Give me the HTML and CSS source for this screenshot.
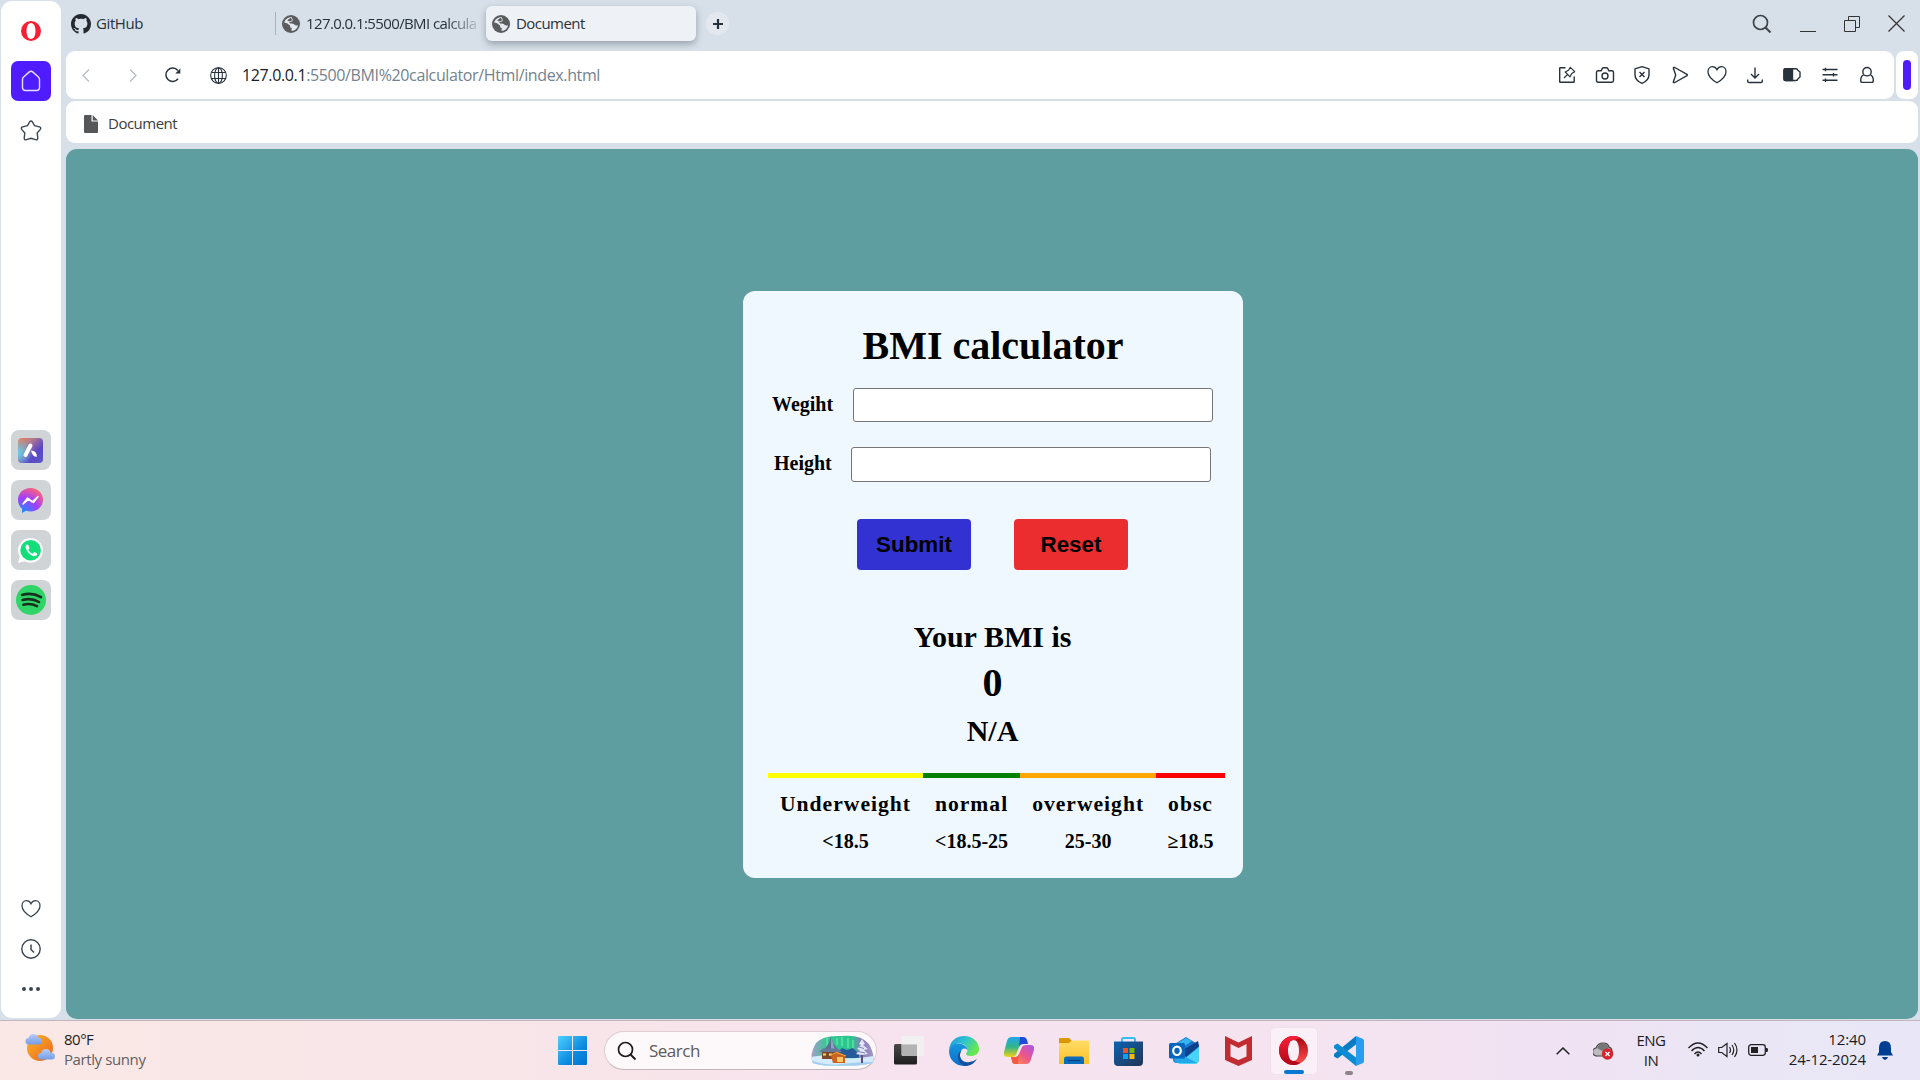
FILE: index.html
```html
<!DOCTYPE html>
<html lang="en">
<head>
<meta charset="utf-8">
<title>Document</title>
<link rel="stylesheet" href="styles.css">
</head>
<body>
<svg class="defs" width="0" height="0" aria-hidden="true">
  <defs>
    <symbol id="globe-solid" viewBox="0 0 18 18"><circle cx="9" cy="9" r="9" fill="#5b5c5e"/><path d="M9.800 2.200C6 1.800 2.600 4.600 2.200 7.600L5 8.200l3 2.200.3 2 1.500.7-.4 2.700c3 .2 6.200-2.200 6.600-5.600-1.500.6-2.600.5-3.400-.4-.9-1.300-2.300-1.100-4.400-1.200L7 7l3.300-.4.4-2z" fill="#e3e9ee"/><path d="M5.200 5.600l3.200-2.800 1.500 1.200-.2 1.800-2.900.4z" fill="#5b5c5e"/></symbol>
    <symbol id="heart" viewBox="0 0 20 20"><path d="M10 17.800C6.500 15.600 1 11.600 1 6.900 1 3.900 2.800 1.700 5.300 1.700c2 0 3.700.9 4.700 3 1-2.100 2.700-3 4.700-3 2.500 0 4.300 2.200 4.300 5.200 0 4.700-5.500 8.700-9 10.900z" fill="none" stroke="currentColor" stroke-width="1.300"/></symbol>
    <symbol id="search" viewBox="0 0 20 20"><circle cx="8.500" cy="8.500" r="7" fill="none" stroke="currentColor" stroke-width="1.700"/><path d="M13.500 13.500l5 5" stroke="currentColor" stroke-width="2"/></symbol>
    <linearGradient id="aria" x1="0" y1="0" x2="1" y2="1"><stop offset="0" stop-color="#e98557"/><stop offset=".3" stop-color="#b77c8c"/><stop offset=".65" stop-color="#5b46c8"/><stop offset="1" stop-color="#5b58c0"/></linearGradient>
    <radialGradient id="ariaGlow" cx="0" cy=".6" r=".6"><stop offset="0" stop-color="#62d0ea"/><stop offset="1" stop-color="#62d0ea" stop-opacity="0"/></radialGradient>
    <radialGradient id="msg" cx=".2" cy="1" r="1.100"><stop offset="0" stop-color="#1591ff"/><stop offset=".55" stop-color="#a23eff"/><stop offset="1" stop-color="#ff6374"/></radialGradient>
    <linearGradient id="sun" x1="0" y1="0" x2="1" y2="1"><stop offset="0" stop-color="#f6b828"/><stop offset="1" stop-color="#f0601c"/></linearGradient>
    <linearGradient id="cloud" x1="0" y1="0" x2="0" y2="1"><stop offset="0" stop-color="#b4cdf8"/><stop offset="1" stop-color="#759de6"/></linearGradient>
    <linearGradient id="win" x1="0" y1="0" x2="1" y2="1"><stop offset="0" stop-color="#4dd0ff"/><stop offset=".6" stop-color="#0c8be0"/><stop offset="1" stop-color="#0071d0"/></linearGradient>
    <linearGradient id="aurora" x1="0" y1="0" x2="1" y2="0"><stop offset="0" stop-color="#a99cc8"/><stop offset=".25" stop-color="#35c598"/><stop offset=".65" stop-color="#2ac690"/><stop offset=".8" stop-color="#8b7bb8"/><stop offset="1" stop-color="#a597c8"/></linearGradient>
    <linearGradient id="dark" x1="0" y1="0" x2="0" y2="1"><stop offset="0" stop-color="#4a4a49"/><stop offset="1" stop-color="#1e1e1e"/></linearGradient>
    <linearGradient id="edgeTop" x1="0" y1="0" x2="1" y2=".5"><stop offset="0" stop-color="#1b91dc"/><stop offset=".5" stop-color="#2cc3d1"/><stop offset="1" stop-color="#68e84e"/></linearGradient>
    <linearGradient id="edgeLow" x1="0" y1="0" x2="0" y2="1"><stop offset="0" stop-color="#1698dc"/><stop offset="1" stop-color="#0a6ecb"/></linearGradient>
    <linearGradient id="copA" x1="0" y1="0" x2="0" y2="1"><stop offset="0" stop-color="#1fa4ee"/><stop offset=".5" stop-color="#32b689"/><stop offset="1" stop-color="#f4d313"/></linearGradient>
    <linearGradient id="copB" x1="1" y1="0" x2="0" y2="1"><stop offset="0" stop-color="#a854ee"/><stop offset=".5" stop-color="#ee5686"/><stop offset="1" stop-color="#ff9c4a"/></linearGradient>
    <linearGradient id="fold" x1="0" y1="0" x2="0" y2="1"><stop offset="0" stop-color="#ffdc66"/><stop offset="1" stop-color="#fbc02a"/></linearGradient>
    <linearGradient id="store" x1="0" y1="0" x2="1" y2="1"><stop offset="0" stop-color="#0a63b4"/><stop offset="1" stop-color="#243454"/></linearGradient>
    <linearGradient id="opRed" x1="0" y1="0" x2="0" y2="1"><stop offset="0" stop-color="#fb1e36"/><stop offset="1" stop-color="#ad0719"/></linearGradient>
    <linearGradient id="opDeep" x1="0" y1="0" x2="0" y2="1"><stop offset="0" stop-color="#a6030f"/><stop offset="1" stop-color="#ff5450"/></linearGradient>
  </defs>
</svg>

<div class="browser">
  <nav class="sidebar">
    <svg class="side-opera" width="20" height="20" viewBox="0 0 20 20"><path fill-rule="evenodd" fill="#fa1e32" d="M10 0a10 10 0 1 0 0 20 10 10 0 0 0 0-20zm0 2c2.900 0 4.500 3.600 4.500 8s-1.600 8-4.500 8-4.500-3.600-4.500-8S7.100 2 10 2z"/></svg>
    <div class="home"><svg width="20" height="22" viewBox="0 0 20 22"><path d="M1.500 9.500Q1.500 8 2.600 7L8.300 1.900Q10 .5 11.700 1.900L17.400 7Q18.500 8 18.500 9.500V17.500Q18.500 20.500 15.500 20.500H4.500Q1.500 20.500 1.500 17.500Z" fill="none" stroke="#e6e0ff" stroke-width="1.400"/></svg></div>
    <svg class="side-star" width="22" height="21" viewBox="0 0 22 21"><path d="M9.600 1.900Q11 .2 12.400 1.900L14.500 5.600 19.300 6.800Q21.500 7.600 20.300 9.400L17.200 13 17.800 18Q17.700 20.300 15.600 19.700L11 18.300 6.400 19.700Q4.300 20.300 4.200 18L4.800 13 1.700 9.400Q.5 7.600 2.700 6.800L7.500 5.600Z" fill="none" stroke="#3c4650" stroke-width="1.400"/></svg>
    <div class="apps">
      <div class="app"><svg width="25" height="25" viewBox="0 0 25 25"><rect width="25" height="25" rx="4" fill="url(#aria)"/><rect width="25" height="25" rx="4" fill="url(#ariaGlow)"/><path d="M12.500 7.500L7.500 17" stroke="#fff" stroke-width="4" stroke-linecap="round"/><path d="M13 12.500q5.500 0 6 6-4 1.500-6-6z" fill="#fff"/></svg></div>
      <div class="app"><svg width="25" height="25" viewBox="0 0 25 25"><path d="M12.500 0C5.500 0 0 5 0 11.800c0 3.700 1.500 6.700 4 9V25l4-2.200c1.400.4 2.900.6 4.500.6C19.500 23.400 25 18.500 25 11.800S19.500 0 12.500 0z" fill="url(#msg)"/><path d="M5 16l4.500-6 4.500 4 6-5.500-4.500 6-4.500-3.500z" fill="#fff" stroke="#fff" stroke-width="1.500" stroke-linejoin="round"/></svg></div>
      <div class="app"><svg width="25" height="25" viewBox="0 0 25 25"><path d="M12.500 0a12.300 12.300 0 0 0-10.700 18.500L0 25l6.600-1.700A12.400 12.400 0 1 0 12.500 0z" fill="#fff"/><circle cx="12.600" cy="12.300" r="10.300" fill="#12df79"/><path d="M8.700 6.500c-4 2.500 4 13 8.600 11.600 1.800-.5 2-1.700 1.800-2.600l-2.900-1.500-1.700 1.700c-2-.8-3.400-2.300-4.200-4l1.200-1.500-1.300-3.400z" fill="#fff"/></svg></div>
      <div class="app"><svg width="30" height="30" viewBox="0 0 30 30"><circle cx="15" cy="15" r="15" fill="#2fd566"/><path d="M6 10q10-3 19 2.200M6.600 15q9-2.500 16.400 2M7.400 19.700q7-2 13.600 1.500" fill="none" stroke="#17301e" stroke-width="2.600" stroke-linecap="round"/></svg></div>
    </div>
    <div class="side-foot">
      <svg width="20" height="20"><use href="#heart"/></svg>
      <svg width="20" height="20" viewBox="0 0 20 20"><circle cx="10" cy="10" r="9.200" fill="none" stroke="currentColor" stroke-width="1.400"/><path d="M10 5.500V10.500L13 13.500" fill="none" stroke="currentColor" stroke-width="1.500"/></svg>
      <svg width="20" height="20" viewBox="0 0 20 20" fill="currentColor"><circle cx="3" cy="10" r="2"/><circle cx="10" cy="10" r="2"/><circle cx="17" cy="10" r="2"/></svg>
    </div>
  </nav>

  <main class="window">
    <header class="tabs">
      <div class="tab tab-first"><svg width="20" height="20" viewBox="0 0 16 16"><path fill="#24292f" d="M8 0C3.580 0 0 3.580 0 8c0 3.540 2.290 6.530 5.470 7.590.4.070.55-.17.55-.38 0-.19-.01-.82-.01-1.490-2.010.37-2.530-.49-2.690-.94-.09-.23-.48-.94-.82-1.130-.28-.15-.68-.52-.01-.53.63-.01 1.080.58 1.230.82.72 1.210 1.870.87 2.330.66.070-.52.28-.87.51-1.070-1.780-.2-3.640-.89-3.640-3.950 0-.87.31-1.590.82-2.150-.08-.2-.36-1.020.08-2.120 0 0 .67-.21 2.200.82.64-.18 1.320-.27 2-.27s1.360.09 2 .27c1.530-1.040 2.200-.82 2.200-.82.44 1.100.16 1.920.08 2.120.51.56.82 1.270.82 2.150 0 3.070-1.870 3.750-3.650 3.950.29.25.54.73.54 1.480 0 1.070-.01 1.930-.01 2.200 0 .21.150.46.55.38A8.010 8.010 0 0 0 16 8c0-4.420-3.580-8-8-8z"/></svg><span>GitHub</span></div>
      <div class="tab tab-second"><svg width="18" height="18"><use href="#globe-solid"/></svg><span class="fade">127.0.0.1:5500/BMI calcula</span></div>
      <div class="tab tab-active"><svg width="18" height="18"><use href="#globe-solid"/></svg><span>Document</span></div>
      <div class="new-tab"><svg width="10" height="10" viewBox="0 0 10 10"><path d="M5 0v10M0 5h10" stroke="#25303a" stroke-width="2.200"/></svg></div>
      <div class="controls">
        <svg width="20" height="20"><use href="#search"/></svg>
        <svg width="16" height="20" viewBox="0 0 16 20"><path d="M0 17.500h16" stroke="#333" stroke-width="1"/></svg>
        <svg width="16" height="16" viewBox="0 0 16 16"><path d="M.5 4.500h11v11H.5zM4.500 4.500v-4h11v11h-4" fill="none" stroke="#333"/></svg>
        <svg width="17" height="17" viewBox="0 0 17 17"><path d="M.5.5l16 16m0-16l-16 16" stroke="#333" stroke-width="1.200"/></svg>
      </div>
    </header>

    <div class="toolbar">
      <div class="address">
        <svg class="nav-back" width="8" height="13" viewBox="0 0 8 13"><path d="M7 .5l-6 6 6 6" fill="none" stroke="#b5bac0" stroke-width="1.200"/></svg>
        <svg class="nav-fwd" width="8" height="13" viewBox="0 0 8 13"><path d="M1 .5l6 6-6 6" fill="none" stroke="#b5bac0" stroke-width="1.200"/></svg>
        <svg class="nav-reload" width="16" height="16" viewBox="0 0 16 16"><path d="M13 11.800A6.700 6.700 0 1 1 12.800 3.500" fill="none" stroke="#28323c" stroke-width="1.500"/><path d="M15.300 1.500v5h-5z" fill="#28323c"/></svg>
        <svg class="nav-site" width="17" height="17" viewBox="0 0 17 17" fill="none" stroke="#28323c" stroke-width="1.100"><circle cx="8.500" cy="8.500" r="7.800"/><ellipse cx="8.500" cy="8.500" rx="3.900" ry="7.800"/><path d="M8.500.7v15.600M1.500 5.500h14M1.500 11.500h14"/></svg>
        <span class="url"><b>127.0.0.1</b>:5500/BMI%20calculator/Html/index.html</span>
        <div class="tools">
          <svg viewBox="0 0 20 20"><path d="M8.500 2.700H3.200Q2.700 2.700 2.700 3.200V16.800Q2.700 17.300 3.200 17.300H16.700Q17.200 17.300 17.200 16.800V11.500"/><path d="M7 13l3.200-3.200M13.300 2.300l4.400 4.400-3 1.800-1.700 3.300-4.800-4.800 3.300-1.700z" stroke-width="1.200" stroke-linejoin="round"/></svg>
          <svg viewBox="0 0 20 20"><path d="M3.200 5.800h2.500Q6.200 5.800 6.500 5.300L7.300 3.400Q7.700 2.700 8.500 2.700h3Q12.300 2.700 12.700 3.400L13.500 5.300Q13.800 5.800 14.300 5.800H16.800Q18.500 5.800 18.500 7.500V15.500Q18.500 17.200 16.800 17.200H3.200Q1.500 17.200 1.500 15.500V7.500Q1.500 5.800 3.200 5.800z"/><circle cx="10" cy="11" r="3"/></svg>
          <svg viewBox="0 0 20 20"><path d="M10 1.600L17 3.800V9.500Q17 15.500 10 18.400 3 15.500 3 9.500V3.800z" stroke-linejoin="round"/><path d="M7.500 7l5 5m0-5l-5 5"/></svg>
          <svg viewBox="0 0 20 20"><path d="M3.300 3Q3.500 2 4.800 2.500L17 9.300Q17.700 10 17 10.700L4.800 17.500Q3.500 18 3.300 17L5.700 10z" stroke-linejoin="round"/></svg>
          <svg viewBox="0 0 20 20"><use href="#heart"/></svg>
          <svg viewBox="0 0 20 20"><path d="M10 2.500V12.500M6 9l4 4 4-4M2.700 14.500V16.200Q2.700 17.500 4 17.500H16Q17.300 17.500 17.300 16.200V14.500"/></svg>
          <svg viewBox="0 0 20 20"><path d="M3.500 3.700H14Q15.500 3.700 15.800 5.200L18 7V12L15.800 14Q15.500 15.500 14 15.500H3.500Q2 15.500 2 14V5.200Q2 3.700 3.500 3.700z"/><path d="M3.500 3.700H10.500V15.500H3.500Q2 15.500 2 14V5.200Q2 3.700 3.500 3.700z" fill="currentColor"/></svg>
          <svg viewBox="0 0 20 20"><path d="M2.500 4.500h15M2.500 9.800h15M2.500 15.200h15M5.500 2.700v3.600M13.500 8v3.600M5.500 13.400V17"/></svg>
          <svg viewBox="0 0 20 20"><circle cx="10" cy="6.700" r="4.200"/><path d="M6.500 9.800Q3.700 11 3.700 15.500 3.700 17.400 5.500 17.400H14.500Q16.300 17.400 16.300 15.500 16.300 11 13.500 9.800"/></svg>
        </div>
      </div>
      <div class="panel-toggle"><span></span></div>
    </div>

    <div class="bookmarks">
      <svg width="14" height="18" viewBox="0 0 14 18"><path d="M1 0h6.500v6.500H14V17q0 1-1 1H1q-1 0-1-1V1q0-1 1-1zM8.700 0L14 5.500H8.700z" fill="#565759"/></svg>
      <span>Document</span>
    </div>

    <section class="page">
      <form class="card">
        <h1>BMI calculator</h1>
        <div class="field"><label for="weight">Wegiht</label><input id="weight" type="text"></div>
        <div class="field field-height"><label for="height">Height</label><input id="height" type="text"></div>
        <div class="actions">
          <button type="button" class="submit">Submit</button>
          <button type="button" class="reset">Reset</button>
        </div>
        <div class="result">
          <h2>Your BMI is</h2>
          <div class="score">0</div>
          <div class="verdict">N/A</div>
        </div>
        <div class="scale">
          <div class="band under"><h3>Underweight</h3><p>&lt;18.5</p></div>
          <div class="band normal"><h3>normal</h3><p>&lt;18.5-25</p></div>
          <div class="band over"><h3>overweight</h3><p>25-30</p></div>
          <div class="band obese"><h3>obsc</h3><p>≥18.5</p></div>
        </div>
      </form>
    </section>
  </main>
</div>

<footer class="taskbar">
  <div class="weather">
    <svg width="30" height="30" viewBox="0 0 30 30"><circle cx="15" cy="15" r="13" fill="url(#sun)"/><path d="M3 11.500a3.300 3.300 0 0 1 .5-6.500Q5 1 8.500 1T13 4.500q3.500 0 4 3.500 0 3.500-3.500 3.500z" fill="url(#cloud)"/><path d="M15.500 26.500a3.300 3.300 0 0 1 .5-6.500q1-4 5-4t4.500 3.500Q30 19.500 30 23q0 3.500-3.500 3.500z" fill="url(#cloud)"/></svg>
    <div class="weather-text"><span>80°F</span><span class="muted">Partly sunny</span></div>
  </div>

  <div class="dock">
    <div class="slot"><svg width="29" height="29" viewBox="0 0 29 29"><path d="M1 0h13v14H0V1q0-1 1-1zM15 0h13q1 0 1 1v13H15zM0 15h14v14H1q-1 0-1-1zM15 15h14v13q0 1-1 1H15z" fill="url(#win)"/></svg></div>
    <div class="search">
      <svg width="20" height="20"><use href="#search"/></svg>
      <span>Search</span>
      <svg class="scene" width="63" height="31" viewBox="0 0 63 31">
        <clipPath id="sceneClip"><path d="M5 8Q12 0 30 1 50-1 58 9 64 20 62 28 50 31 30 30.500 8 31 2 28-2 20 5 8z"/></clipPath>
        <g clip-path="url(#sceneClip)"><rect width="63" height="31" fill="url(#aurora)"/><path d="M16 3v9m10-9v7m5-8v9m6-8v10m5-8v9" stroke="#63f0a4" stroke-opacity=".6" stroke-width="2"/><path d="M26 18L31 13l5 2 6-2 6 6v4H26z" fill="#275a99"/><path d="M0 22q12-3 24 0t39-1v10H0z" fill="#d3ebfb"/><path d="M0 25q14 6 30 4t33-2v4H0z" fill="#a4cdf2"/><path d="M20 1l2 7 5 7H13l5-7z" fill="#5f6c8f"/><path d="M20 1l2 7 2 7h-4z" fill="#8fa0c0"/><path d="M11 15h17v9H11z" fill="#7c482c"/><path d="M8 17l4-3.500h15l4 3.500z" fill="#66789a"/><path d="M12 18.500h3v2h-3zm6 0h3v2h-3z" fill="#ffd65c"/><path d="M20 21l7-4 7 4v7H22z" fill="#c9651f"/><path d="M26 22h6v5h-6z" fill="#ffc56a"/><path d="M18 20.500l8-3 9 3.500" stroke="#ffb13b" fill="none"/><path d="M51 6v22" stroke="#5d4c78" stroke-width="2"/><path d="M51 4l3 5-2 1 5 4-4 1 4 4-6 1-6-1 4-4-3-1 4-4-2-1z" fill="#e0e4f6"/><path d="M48 12l5 1.500m-6 3l7 1.500" stroke="#7d84ab"/></g>
      </svg>
    </div>
    <div class="slot"><svg width="30" height="29" viewBox="0 0 30 29"><rect y="8" width="23" height="20.500" rx="1.500" fill="url(#dark)"/><rect x="7.500" y="0" width="22.500" height="20" rx="1.500" fill="#f1f1f1" fill-opacity=".95"/><path d="M8 8.500h15V20H8z" fill="#b3b3b3"/></svg></div>
    <div class="slot"><svg width="30" height="30" viewBox="0 0 30 30"><path d="M0 14C1 5 7 0 15 0c9 0 15 6 15 13 0 5-4 7-8 7-3 0-5-1-5-2 0-1 1.500-1.500 1.500-4C18.500 9 13 7 9 7.500 4 8 1 11 0 14z" fill="url(#edgeTop)"/><path d="M0 15C1 9 5 7.500 9 7.500c5 0 9.500 3 9.500 6.500-3-3-7-1-7.500 4-.5 6 4 10 8 11.200C9 32 0 25 0 15z" fill="url(#edgeLow)"/><path d="M12.500 14.500C9 20 12 25 17 26q6 1 11-3c-3 5-8 7.500-12.500 7C9 28 6 18 12.500 14.500z" fill="#1252a0"/></svg></div>
    <div class="slot"><svg width="30" height="28" viewBox="0 0 30 28"><path d="M8 0h10q3 0 4 3l1 4h-4q-3 0-4 3l-3 8q-1 2-4 2H4q-5 0-4-5L3 4q1-4 5-4z" fill="url(#copA)"/><path d="M16 0h3q3 0 4 3l1 4h-5q-3 0-4 3z" fill="#1c4cd8"/><path d="M22 27H12q-3 0-4-3l-1-4h4q3 0 4-3l3-7q1-2 4-2h4q5 0 4 5l-3 9q-1 5-5 5z" fill="url(#copB)"/><path d="M14 27h-3q-3 0-3-3l-1-4h4q3 0 4-3z" fill="#f45a42"/></svg></div>
    <div class="slot"><svg width="30" height="28" viewBox="0 0 30 28"><path d="M0 2q0-1 1-1h9l3 3-3 3H0z" fill="#dc9700"/><path d="M0 6h10l3-2.500h16q1 0 1 1V27H0z" fill="url(#fold)"/><path d="M5 27v-5q0-2.500 2.500-2.500h15q2.500 0 2.500 2.500v5z" fill="#0b6dba"/><path d="M8.500 23.500h13" stroke="#073f7c" stroke-width="1.200"/></svg></div>
    <div class="slot"><svg width="29" height="30" viewBox="0 0 29 30"><path d="M8 6V3.500Q8 2 9.500 2h10Q21 2 21 3.500V6" fill="none" stroke="#35bdf2" stroke-width="2"/><path d="M0 5.500h29V26q0 4-4 4H4q-4 0-4-4z" fill="url(#store)"/><path d="M9 12h5v5H9z" fill="#f35022"/><path d="M15.500 12h5v5h-5z" fill="#7db700"/><path d="M9 18h5v5H9z" fill="#0aa4ee"/><path d="M15.500 18h5v5h-5z" fill="#ffb803"/></svg></div>
    <div class="slot"><svg width="30" height="27" viewBox="0 0 30 27"><path d="M4 8L17 0l13 8v14q0 4-4 4H8q-4 0-4-4z" fill="#1676cb"/><path d="M7 7L17 1l6 3-13 9z" fill="#35b4ef"/><path d="M14 13l15-9 1 5-13 11z" fill="#103f8c"/><path d="M30 10v12q0 5-4 5H9z" fill="#48d4f7"/><path d="M5 20l10-1 13 7H9q-4 0-4-6z" fill="#22a7e8"/><rect y="6" width="16" height="15.500" rx="1.500" fill="#0865bd"/><ellipse cx="8" cy="13.800" rx="3.800" ry="4.200" fill="none" stroke="#fff" stroke-width="2.200"/></svg></div>
    <div class="slot"><svg width="27" height="30" viewBox="0 0 27 30"><path d="M0 0l13.500 6.500L27 0v24l-13.500 6L0 24zM5.500 8v12.500l8 3.500 8-3.500V8l-8 4z" fill="#c02c31" fill-rule="evenodd"/></svg></div>
    <div class="slot"><div class="active-app"><svg width="29" height="29" viewBox="0 0 29 29"><path fill-rule="evenodd" fill="url(#opDeep)" d="M14.500 0a14.500 14.500 0 1 1 0 29 14.500 14.500 0 0 1 0-29zm0 4c-4 0-5.500 5-5.500 10.500S10.500 25 14.500 25 20 20 20 14.500 18.500 4 14.500 4z"/><path fill="url(#opRed)" d="M14.500 0a14.500 14.500 0 0 0 0 29c2.500 0 5-.8 7-2.300-2.200-.4-4.200-1.200-5.500-2-.5.200-1 .3-1.500.3-4 0-5.500-5-5.500-10.500S10.500 4 14.500 4q.8 0 1.500.3c1.300-1 3.300-1.700 5.500-2C19.500.8 17 0 14.500 0z"/></svg><i class="indicator"></i></div></div>
    <div class="slot"><div class="running-app"><svg width="30" height="30" viewBox="0 0 30 30"><path d="M22 0v8.500L3.500 22.500 0 20.500V18z" fill="#087dc3"/><path d="M22 30v-8.500L3.500 7.500 0 9.500V12z" fill="#0a8bd3"/><path d="M22 0l7 3q1 .5 1 2v20q0 1.500-1 2l-7 3z" fill="#279df0"/></svg><i class="indicator"></i></div></div>
  </div>

  <div class="tray">
    <svg class="chevron" width="14" height="8" viewBox="0 0 14 8"><path d="M.7 7.300L7 1l6.300 6.300" fill="none" stroke="#222" stroke-width="1.500"/></svg>
    <svg class="sync" width="21" height="18" viewBox="0 0 21 18"><path d="M4.500 14A4 4 0 0 1 3 6Q5 1 10 1t6 4q3 1 3 4.500T15 14z" fill="#bcbcbc" stroke="#444" stroke-width="1.200"/><path d="M4 6Q6 1.500 10 1.500T16 6L9 9z" fill="#777"/><circle cx="14.500" cy="12" r="5.700" fill="#d8232f"/><path d="M12.500 10l4 4m0-4l-4 4" stroke="#fff" stroke-width="1.300"/></svg>
    <div class="lang"><span>ENG</span><span>IN</span></div>
    <div class="status">
      <svg width="20" height="15" viewBox="0 0 20 15" fill="none" stroke="#222" stroke-width="1.400"><path d="M.5 6Q10-4 19.500 6M3.500 9Q10 2 16.500 9M6.500 12Q10 8 13.500 12"/><circle cx="10" cy="13" r="1.500" fill="#222" stroke="none"/></svg>
      <svg width="20" height="16" viewBox="0 0 20 16" fill="none" stroke="#222" stroke-width="1.200"><path d="M.7 5.500h3L9 1.500v13l-5.300-4h-3zM11.500 5Q13.500 8 11.500 11M14 3q3.500 5 0 10M16.500 1q5 7 0 14"/></svg>
      <svg width="20" height="12" viewBox="0 0 20 12"><rect x=".7" y=".7" width="16.600" height="10.600" rx="2.500" fill="none" stroke="#222" stroke-width="1.300"/><path d="M3 3h7v6H3zM18 4h1q1 0 1 2t-1 2h-1z" fill="#222"/></svg>
    </div>
    <div class="clock"><span>12:40</span><span>24-12-2024</span></div>
    <svg class="bell" width="16" height="19" viewBox="0 0 16 19"><path d="M8 0Q14 0 14 7v4l2 3.500H0L2 11V7Q2 0 8 0zM5 16h6q-1 3-3 3t-3-3z" fill="#003e92"/></svg>
  </div>
</footer>
</body>
</html>
```
FILE: styles.css
```css
* { box-sizing: border-box; }
body {
  margin: 0;
  width: 1920px;
  height: 1080px;
  overflow: hidden;
  display: flex;
  flex-direction: column;
  font-family: "Open Sans", "Noto Sans", sans-serif;
  font-size: 15px;
  color: #28323c;
}
svg { display: block; flex: none; }
.defs { position: absolute; }

/* Browser frame */
.browser {
  height: 1020px;
  display: flex;
  gap: 5px;
  padding: 0 2px 1px 1px;
  background: #d7e0e8;
}
.sidebar {
  width: 60px;
  height: 1017px;
  margin-top: 1px;
  padding-right: 1px;
  display: flex;
  flex-direction: column;
  align-items: center;
  background: #fff;
  border-radius: 11px;
  color: #3c4650;
}
.side-opera { margin-top: 20px; }
.home {
  width: 40px;
  height: 40px;
  margin-top: 20px;
  display: flex;
  align-items: center;
  justify-content: center;
  background: #4f1cff;
  border-radius: 7px;
}
.side-star { margin-top: 19px; }
.apps {
  display: flex;
  flex-direction: column;
  gap: 10px;
  margin-top: 289px;
}
.app {
  width: 40px;
  height: 40px;
  display: flex;
  align-items: center;
  justify-content: center;
  background: #d0d4d7;
  border-radius: 8px;
}
.side-foot {
  margin-top: auto;
  padding-bottom: 19px;
  display: flex;
  flex-direction: column;
  gap: 20px;
}
.window {
  flex: 1;
  min-width: 0;
  display: flex;
  flex-direction: column;
}

/* Tabs */
.tabs {
  height: 51px;
  display: flex;
  align-items: center;
  padding: 0 13px 4px 0;
}
.tab {
  height: 35px;
  display: flex;
  align-items: center;
  letter-spacing: -0.55px;
  white-space: nowrap;
}
.tab span { padding-bottom: 2px; }
.tab-first { width: 209px; padding-left: 5px; gap: 5px; letter-spacing: -0.4px; }
.tab-second {
  width: 206px;
  margin-right: 5px;
  gap: 6px;
  letter-spacing: -0.6px;
}
.tab-second::before { content: ""; width: 1px; height: 23px; background: #a9b3bc; }
.tab-second .fade {
  width: 175px;
  -webkit-mask-image: linear-gradient(90deg, #000 140px, transparent 178px);
  mask-image: linear-gradient(90deg, #000 140px, transparent 178px);
}
.tab-active {
  width: 210px;
  padding-left: 6px;
  gap: 6px;
  background: #eef1f6;
  border-radius: 6px;
  box-shadow: 0 3px 7px rgba(70, 85, 105, .45);
}
.new-tab {
  width: 23px;
  height: 23px;
  margin-left: 10px;
  display: flex;
  align-items: center;
  justify-content: center;
  border-radius: 50%;
  background: #e3e8ee;
}
.controls {
  margin-left: auto;
  display: flex;
  align-items: center;
  gap: 28px;
  color: #3e4246;
}

/* Address row */
.toolbar { height: 48px; display: flex; gap: 2px; }
.address {
  width: 1828px;
  padding: 0 17px 0 16px;
  display: flex;
  align-items: center;
  background: #fff;
  border-radius: 9px;
}
.nav-fwd { margin-left: 39px; }
.nav-reload { margin-left: 28px; }
.nav-site { margin-left: 29px; }
.url {
  margin-left: 15px;
  font-size: 16px;
  letter-spacing: -0.37px;
  color: #74828f;
  white-space: nowrap;
}
.url b { font-weight: 400; color: #18212a; }
.tools {
  margin-left: auto;
  display: flex;
  gap: 17.500px;
  padding-bottom: 1px;
}
.tools svg {
  width: 20px;
  height: 20px;
  fill: none;
  stroke: currentColor;
  stroke-width: 1.400;
}
.panel-toggle {
  flex: 1;
  display: flex;
  align-items: center;
  justify-content: center;
  background: #fff;
  border-radius: 8px;
}
.panel-toggle span { width: 8px; height: 30px; border-radius: 4px; background: #4f1cff; }

.bookmarks {
  height: 42px;
  margin: 2px 0 6px;
  padding-left: 18px;
  display: flex;
  align-items: center;
  gap: 10px;
  background: #fff;
  border-radius: 9px;
  color: #3a3d42;
  letter-spacing: -0.5px;
}
.bookmarks svg { margin-top: 4px; }
.bookmarks span { padding-top: 2px; }

/* BMI page */
.page {
  height: 870px;
  padding: 1px 0 0 2px;
  display: flex;
  align-items: center;
  justify-content: center;
  background: #5f9ea0;
  border-radius: 11px;
}
.card {
  width: 500px;
  height: 587px;
  padding: 32px 18px 0 25px;
  background: aliceblue;
  border-radius: 12px;
  color: #000;
  font-family: "Liberation Serif", "Times New Roman", serif;
  font-weight: 700;
}
.card h1, .card h2, .card h3, .card p { margin: 0; font-weight: 700; }
.card h1 {
  margin: 0 0 19px -7px;
  font-size: 40px;
  line-height: 46px;
  text-align: center;
}
.field {
  display: flex;
  gap: 20px;
  padding-left: 4px;
  margin-bottom: 25px;
  font-size: 20px;
  line-height: 32px;
}
.field label { width: 61px; height: 34px; white-space: nowrap; }
.field input {
  width: 360px;
  height: 34px;
  margin: 0;
  border: 1px solid #767676;
  border-radius: 3px;
  background: #fff;
}
.field-height { padding-left: 6px; margin-bottom: 37px; }
.field-height label { width: 57px; }
.field-height input { height: 35px; }
.actions {
  display: flex;
  gap: 43px;
  padding-left: 89px;
}
.actions button {
  width: 114px;
  height: 51px;
  padding: 0;
  border: 0;
  border-radius: 4px;
  color: #000;
  font: 700 22.400px "Liberation Sans", Arial, sans-serif;
}
.submit { background: #3232d2; }
.reset { background: #ec2d2f; }
.result {
  margin: 50px 0 25px -8px;
  text-align: center;
  font-size: 30px;
  line-height: 34px;
}
.result h2 { font-size: 30px; }
.score { margin: 6px 0 8px; font-size: 40px; line-height: 46px; }
.scale { display: flex; text-align: center; }
.band { padding: 14px 12px 0; border-top: 5px solid; white-space: nowrap; }
.band h3 { font-size: 21.600px; line-height: 24px; letter-spacing: 1px; }
.band p { margin: 14px -4px 0; font-size: 20px; line-height: 22px; }
.under { border-color: yellow; }
.normal { border-color: green; }
.over { border-color: orange; }
.obese { border-color: red; }

/* Taskbar */
.taskbar {
  height: 60px;
  display: grid;
  grid-template-columns: 545px 832px 1fr;
  border-top: 1px solid #c3b4bd;
  background: linear-gradient(90deg, #fae8e6 0, #f8e5e9 30%, #f6e3ef 48%, #f5e4f0 68%, #f1e2f3 80%, #eae6f5 90%, #e9e7f7 100%);
  color: #1c1c1e;
}
.weather { display: flex; gap: 9px; padding: 12px 0 0 25px; }
.weather-text { display: flex; flex-direction: column; margin-top: -4px; line-height: 20px; letter-spacing: -0.5px; }
.muted { color: #625f61; letter-spacing: -0.4px; }
.dock { display: flex; align-items: center; }
.slot { width: 55px; height: 58px; display: flex; align-items: center; justify-content: center; }
.search {
  width: 273px;
  height: 39px;
  margin: 0 4px;
  padding: 0 2px 0 12px;
  display: flex;
  align-items: center;
  background: #fdf8f9;
  border: 1px solid #dfcbd1;
  border-bottom-color: #c5b5bb;
  border-radius: 20px;
}
.search span { margin-left: 12px; padding-bottom: 1px; font-size: 17px; letter-spacing: -0.5px; color: #5d5a5c; }
.scene { margin-left: auto; }
.active-app, .running-app {
  position: relative;
  width: 48px;
  height: 48px;
  display: flex;
  align-items: center;
  justify-content: center;
}
.active-app { background: #fbf0f7; border: 1px solid #f0e2ec; border-radius: 5px; }
.indicator {
  position: absolute;
  bottom: 0;
  left: 50%;
  width: 8px;
  height: 4px;
  margin-left: -4px;
  border-radius: 2px;
  background: #8d8389;
}
.active-app .indicator { width: 20px; margin-left: -10px; background: #0578d4; }
.tray {
  display: flex;
  align-items: center;
  padding: 0 27px 0 179px;
  letter-spacing: -0.5px;
}
.sync { margin-left: 23px; }
.lang, .clock { display: flex; flex-direction: column; line-height: 20px; white-space: nowrap; }
.lang { width: 74px; align-items: center; padding-bottom: 1px; }
.status { display: flex; align-items: center; gap: 10px; padding-bottom: 2px; }
.clock { width: 98px; align-items: flex-end; padding-bottom: 3px; letter-spacing: -0.1px; }
.bell { margin-left: 11px; }
```
